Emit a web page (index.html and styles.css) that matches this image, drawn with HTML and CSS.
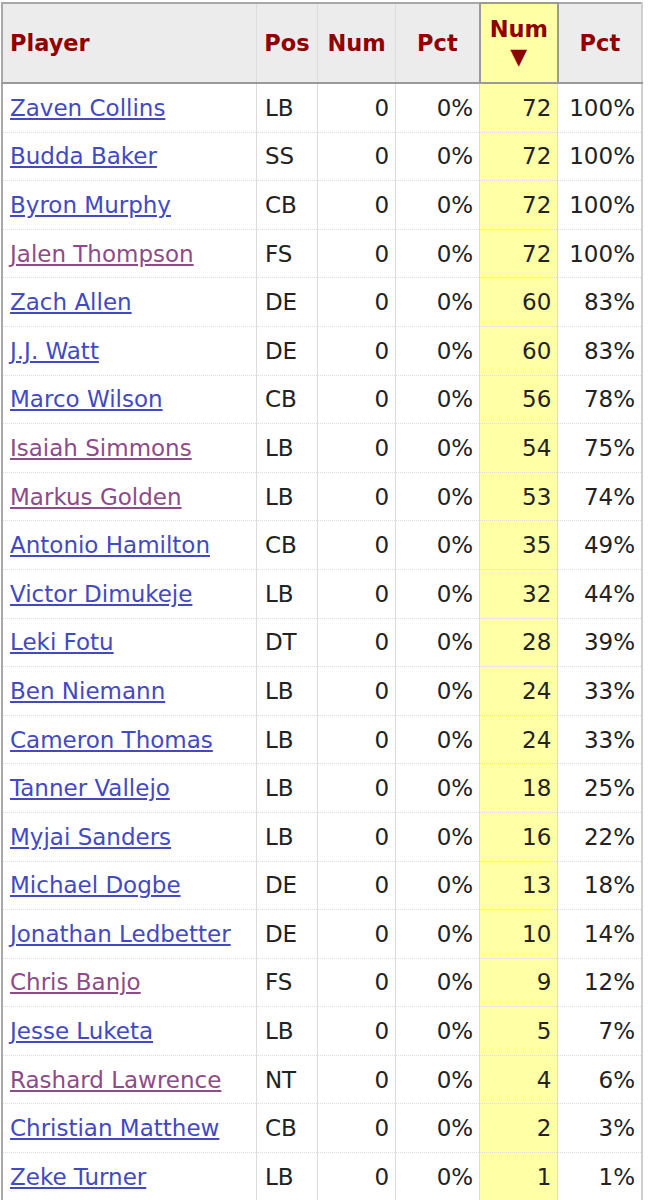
FILE: index.html
```html
<!DOCTYPE html>
<html>
<head>
<meta charset="utf-8">
<link rel="stylesheet" href="styles.css">
</head>
<body>
<table class="stats">
  <colgroup>
    <col class="c-player"><col class="c-pos"><col class="c-num"><col class="c-pct"><col class="c-num"><col class="c-pct">
  </colgroup>
  <thead>
    <tr>
      <th class="left">Player</th>
      <th>Pos</th>
      <th>Num</th>
      <th>Pct</th>
      <th class="sorted">Num<span class="arrow">▼</span></th>
      <th>Pct</th>
    </tr>
  </thead>
  <tbody>
    <tr><td><a href="#">Zaven Collins</a></td><td class="pos">LB</td><td>0</td><td>0%</td><td class="sorted">72</td><td>100%</td></tr>
    <tr><td><a href="#">Budda Baker</a></td><td class="pos">SS</td><td>0</td><td>0%</td><td class="sorted">72</td><td>100%</td></tr>
    <tr><td><a href="#">Byron Murphy</a></td><td class="pos">CB</td><td>0</td><td>0%</td><td class="sorted">72</td><td>100%</td></tr>
    <tr><td><a class="visited" href="#">Jalen Thompson</a></td><td class="pos">FS</td><td>0</td><td>0%</td><td class="sorted">72</td><td>100%</td></tr>
    <tr><td><a href="#">Zach Allen</a></td><td class="pos">DE</td><td>0</td><td>0%</td><td class="sorted">60</td><td>83%</td></tr>
    <tr><td><a href="#">J.J. Watt</a></td><td class="pos">DE</td><td>0</td><td>0%</td><td class="sorted">60</td><td>83%</td></tr>
    <tr><td><a href="#">Marco Wilson</a></td><td class="pos">CB</td><td>0</td><td>0%</td><td class="sorted">56</td><td>78%</td></tr>
    <tr><td><a class="visited" href="#">Isaiah Simmons</a></td><td class="pos">LB</td><td>0</td><td>0%</td><td class="sorted">54</td><td>75%</td></tr>
    <tr><td><a class="visited" href="#">Markus Golden</a></td><td class="pos">LB</td><td>0</td><td>0%</td><td class="sorted">53</td><td>74%</td></tr>
    <tr><td><a href="#">Antonio Hamilton</a></td><td class="pos">CB</td><td>0</td><td>0%</td><td class="sorted">35</td><td>49%</td></tr>
    <tr><td><a href="#">Victor Dimukeje</a></td><td class="pos">LB</td><td>0</td><td>0%</td><td class="sorted">32</td><td>44%</td></tr>
    <tr><td><a href="#">Leki Fotu</a></td><td class="pos">DT</td><td>0</td><td>0%</td><td class="sorted">28</td><td>39%</td></tr>
    <tr><td><a href="#">Ben Niemann</a></td><td class="pos">LB</td><td>0</td><td>0%</td><td class="sorted">24</td><td>33%</td></tr>
    <tr><td><a href="#">Cameron Thomas</a></td><td class="pos">LB</td><td>0</td><td>0%</td><td class="sorted">24</td><td>33%</td></tr>
    <tr><td><a href="#">Tanner Vallejo</a></td><td class="pos">LB</td><td>0</td><td>0%</td><td class="sorted">18</td><td>25%</td></tr>
    <tr><td><a href="#">Myjai Sanders</a></td><td class="pos">LB</td><td>0</td><td>0%</td><td class="sorted">16</td><td>22%</td></tr>
    <tr><td><a href="#">Michael Dogbe</a></td><td class="pos">DE</td><td>0</td><td>0%</td><td class="sorted">13</td><td>18%</td></tr>
    <tr><td><a href="#">Jonathan Ledbetter</a></td><td class="pos">DE</td><td>0</td><td>0%</td><td class="sorted">10</td><td>14%</td></tr>
    <tr><td><a class="visited" href="#">Chris Banjo</a></td><td class="pos">FS</td><td>0</td><td>0%</td><td class="sorted">9</td><td>12%</td></tr>
    <tr><td><a href="#">Jesse Luketa</a></td><td class="pos">LB</td><td>0</td><td>0%</td><td class="sorted">5</td><td>7%</td></tr>
    <tr><td><a class="visited" href="#">Rashard Lawrence</a></td><td class="pos">NT</td><td>0</td><td>0%</td><td class="sorted">4</td><td>6%</td></tr>
    <tr><td><a href="#">Christian Matthew</a></td><td class="pos">CB</td><td>0</td><td>0%</td><td class="sorted">2</td><td>3%</td></tr>
    <tr><td><a href="#">Zeke Turner</a></td><td class="pos">LB</td><td>0</td><td>0%</td><td class="sorted">1</td><td>1%</td></tr>
  </tbody>
</table>
</body>
</html>
```
FILE: styles.css
```css
html, body {
  margin: 0;
  padding: 0;
  background: #fff;
}
body {
  padding: 2px 0 0 1px;
  font-family: "DejaVu Sans", Verdana, sans-serif;
  font-size: 23px;
  color: #222;
}
.stats {
  border-collapse: collapse;
  table-layout: fixed;
  width: 642px;
  border-top: 2px solid #a8a8a8;
  border-left: 2px solid #a8a8a8;
  border-right: 2px solid #cfcfcf;
}
.c-player { width: 254px; }
.c-pos { width: 61px; }
.c-num { width: 78px; }
.c-pct { width: 84px; }
.stats th {
  background: #ececec;
  color: #8f0000;
  font-size: 22.5px;
  font-weight: bold;
  text-align: center;
  height: 78px;
  padding: 0 6px;
  border-left: 1px solid #dcdcdc;
  border-bottom: 2px solid #9a9a9a;
  white-space: nowrap;
}
.stats th.left {
  text-align: left;
  padding-left: 7px;
}
.stats th.sorted {
  background: #ffffa6;
  border: 2px solid #9a9a9a;
  line-height: 27px;
  padding-top: 0;
}
.arrow {
  display: block;
  font-size: 22px;
  line-height: 28px;
}
.stats td {
  height: 47.6px;
  padding: 0 6px;
  text-align: right;
  border-left: 1px solid #dcdcdc;
  border-top: 1px dotted #dedede;
  white-space: nowrap;
}
.stats td:first-child {
  text-align: left;
  padding-left: 7px;
  border-left: none;
}
.stats td.pos {
  text-align: left;
  padding-left: 8px;
}
.stats td.sorted {
  background: #ffffa6;
}
.stats a {
  color: #4349c2;
  text-decoration: underline;
}
.stats a.visited {
  color: #8d4b87;
}
```
